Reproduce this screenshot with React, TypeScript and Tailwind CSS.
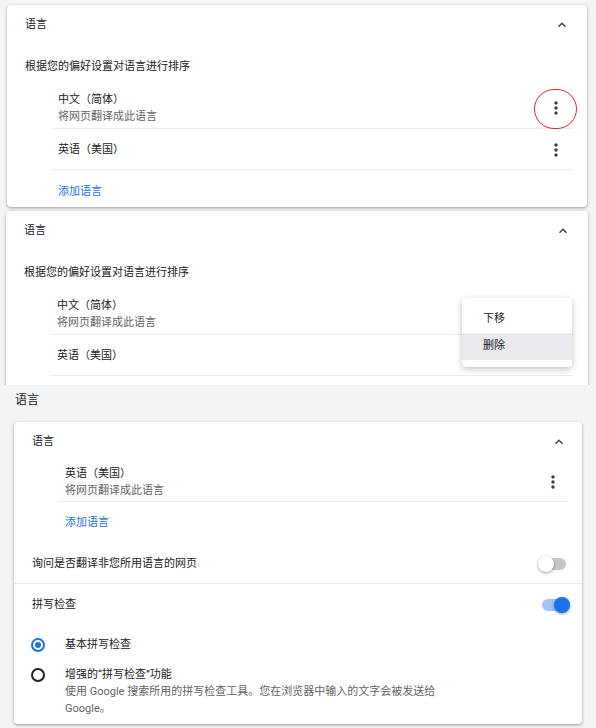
import React from 'react';

// --- Icons ---
const MoreVert = () => (
    <svg width="20" height="20" viewBox="0 0 24 24" fill="#3c4043">
        <path d="M12 8c1.1 0 2-.9 2-2s-.9-2-2-2-2 .9-2 2 .9 2 2 2zm0 2c-1.1 0-2 .9-2 2s.9 2 2 2 2-.9 2-2-.9-2-2-2zm0 6c-1.1 0-2 .9-2 2s.9 2 2 2 2-.9 2-2-.9-2-2-2z" />
    </svg>
);

const ExpandLess = () => (
    <svg width="16" height="16" viewBox="0 0 24 24" fill="#3c4043">
        <path d="M12 8l-6 6 1.41 1.41L12 10.83l4.59 4.58L18 14z" />
    </svg>
);

const Toggle = ({ on }: { on: boolean }) => (
    <div className={`relative w-[24px] h-[12px] rounded-full ${on ? 'bg-[#a4c3f6]' : 'bg-[#c4c7cb]'}`}>
        <div
            className={`absolute top-[-2px] w-[16px] h-[16px] rounded-full ${on ? 'right-[-4px] bg-[#1a73e8]' : 'left-[-4px] bg-white'} shadow-[0_1px_3px_rgba(0,0,0,0.4)]`}
        />
    </div>
);

const Radio = ({ checked }: { checked: boolean }) => (
    <div
        className={`w-[14px] h-[14px] rounded-full border-[2px] flex items-center justify-center ${checked ? 'border-[#1a73e8]' : 'border-[#202124]'}`}
    >
        {checked && <div className="w-[6px] h-[6px] rounded-full bg-[#1a73e8]" />}
    </div>
);

const cardShadow = 'bg-white rounded-[4px] shadow-[0_1px_2px_rgba(60,64,67,0.3),0_1px_3px_1px_rgba(60,64,67,0.15)]';

// --- Language card used in the first two panels ---
function SortedLanguages({ circled, menu }: { circled?: boolean; menu?: boolean }) {
    return (
        <div className={`relative ${cardShadow}`}>
            <div className="h-[38px] pt-[2px] flex items-center justify-between pl-[18px] pr-[17px]">
                <span>语言</span>
                <ExpandLess />
            </div>
            <div className="mt-[15px] pl-[18px] leading-[18px]">根据您的偏好设置对语言进行排序</div>

            <div className="ml-[45px] mr-[15px] mt-[9px]">
                <div className="h-[44px] pt-[2px] flex items-center justify-between pl-[6px] pr-[6px] border-b border-[#e8eaed]">
                    <div className="leading-[17px]">
                        <div>中文（简体）</div>
                        <div className="text-[#5f6368]">将网页翻译成此语言</div>
                    </div>
                    {!menu && <MoreVert />}
                </div>
                <div className="h-[41px] pt-[2px] flex items-center justify-between pl-[6px] pr-[6px] border-b border-[#e8eaed]">
                    <div>英语（美国）</div>
                    {!menu && <MoreVert />}
                </div>
                {/* the clipped copy leaves this row blank: it is cut off in the screenshot */}
                <div className="h-[37px] pl-[6px] pt-[13px] leading-[18px] text-[#1a73e8]">{!menu && '添加语言'}</div>
            </div>

            {circled && (
                <div className="absolute left-[527px] top-[84px] w-[43px] h-[40px] rounded-full border-[1.5px] border-[#e0262b]" />
            )}

            {menu && (
                <div className={`absolute right-[16px] top-[87px] w-[110px] pt-[8px] pb-[7px] ${cardShadow} shadow-[0_2px_6px_rgba(0,0,0,0.25)]`}>
                    <div className="h-[27px] flex items-center pl-[21px]">下移</div>
                    <div className="h-[27px] flex items-center pl-[21px] bg-[#e8e9ec]">删除</div>
                </div>
            )}
        </div>
    );
}

export default function App() {
    return (
        <div className="w-[596px] h-[728px] overflow-hidden bg-[#f3f4f5] text-[11px] text-[#202124] font-['Roboto','Noto_Sans_CJK_SC',sans-serif]">
            {/* PANEL 1 */}
            <div className="pt-[5px] pl-[7px] pr-[9px]">
                <SortedLanguages circled />
            </div>

            {/* PANEL 2 (menu open, clipped) */}
            <div className="h-[178px] overflow-hidden pt-[4px] pl-[6px] pr-[8px]">
                <SortedLanguages menu />
            </div>

            {/* PANEL 3 */}
            <div className="px-[14px]">
                <div className="pt-[5px] pl-[1px] leading-[20px] text-[12px]">语言</div>
                <div className={`mt-[12px] ${cardShadow}`}>
                    <div className="h-[38px] pt-[2px] flex items-center justify-between pl-[18px] pr-[15px]">
                        <span>语言</span>
                        <ExpandLess />
                    </div>

                    <div className="ml-[44px] mr-[14px]">
                        <div className="h-[42px] pt-[2px] flex items-center justify-between pl-[7px] pr-[5px] border-b border-[#e8eaed]">
                            <div className="leading-[17px]">
                                <div>英语（美国）</div>
                                <div className="text-[#5f6368]">将网页翻译成此语言</div>
                            </div>
                            <MoreVert />
                        </div>
                        <div className="h-[40px] pt-[2px] flex items-center pl-[7px] text-[#1a73e8]">添加语言</div>
                    </div>

                    <div className="h-[42px] pt-[3px] flex items-center justify-between pl-[18px] pr-[16px] border-b border-[#e8eaed]">
                        <span>询问是否翻译非您所用语言的网页</span>
                        <Toggle on={false} />
                    </div>
                    <div className="h-[40px] pt-[2px] flex items-center justify-between pl-[18px] pr-[16px]">
                        <span>拼写检查</span>
                        <Toggle on />
                    </div>

                    <div className="pt-[6px] pb-[7px]">
                        <div className="h-[28px] pt-[2px] flex items-center pl-[17px] gap-[20px]">
                            <Radio checked />
                            <span>基本拼写检查</span>
                        </div>
                        <div className="mt-[8px] flex items-start pl-[17px] gap-[20px] leading-[17px]">
                            <div className="h-[17px] flex items-center">
                                <Radio checked={false} />
                            </div>
                            <div>
                                <div>增强的“拼写检查”功能</div>
                                <div className="text-[#5f6368] w-[380px]">
                                    使用 Google 搜索所用的拼写检查工具。您在浏览器中输入的文字会被发送给 Google。
                                </div>
                            </div>
                        </div>
                    </div>
                </div>
            </div>
        </div>
    );
}
